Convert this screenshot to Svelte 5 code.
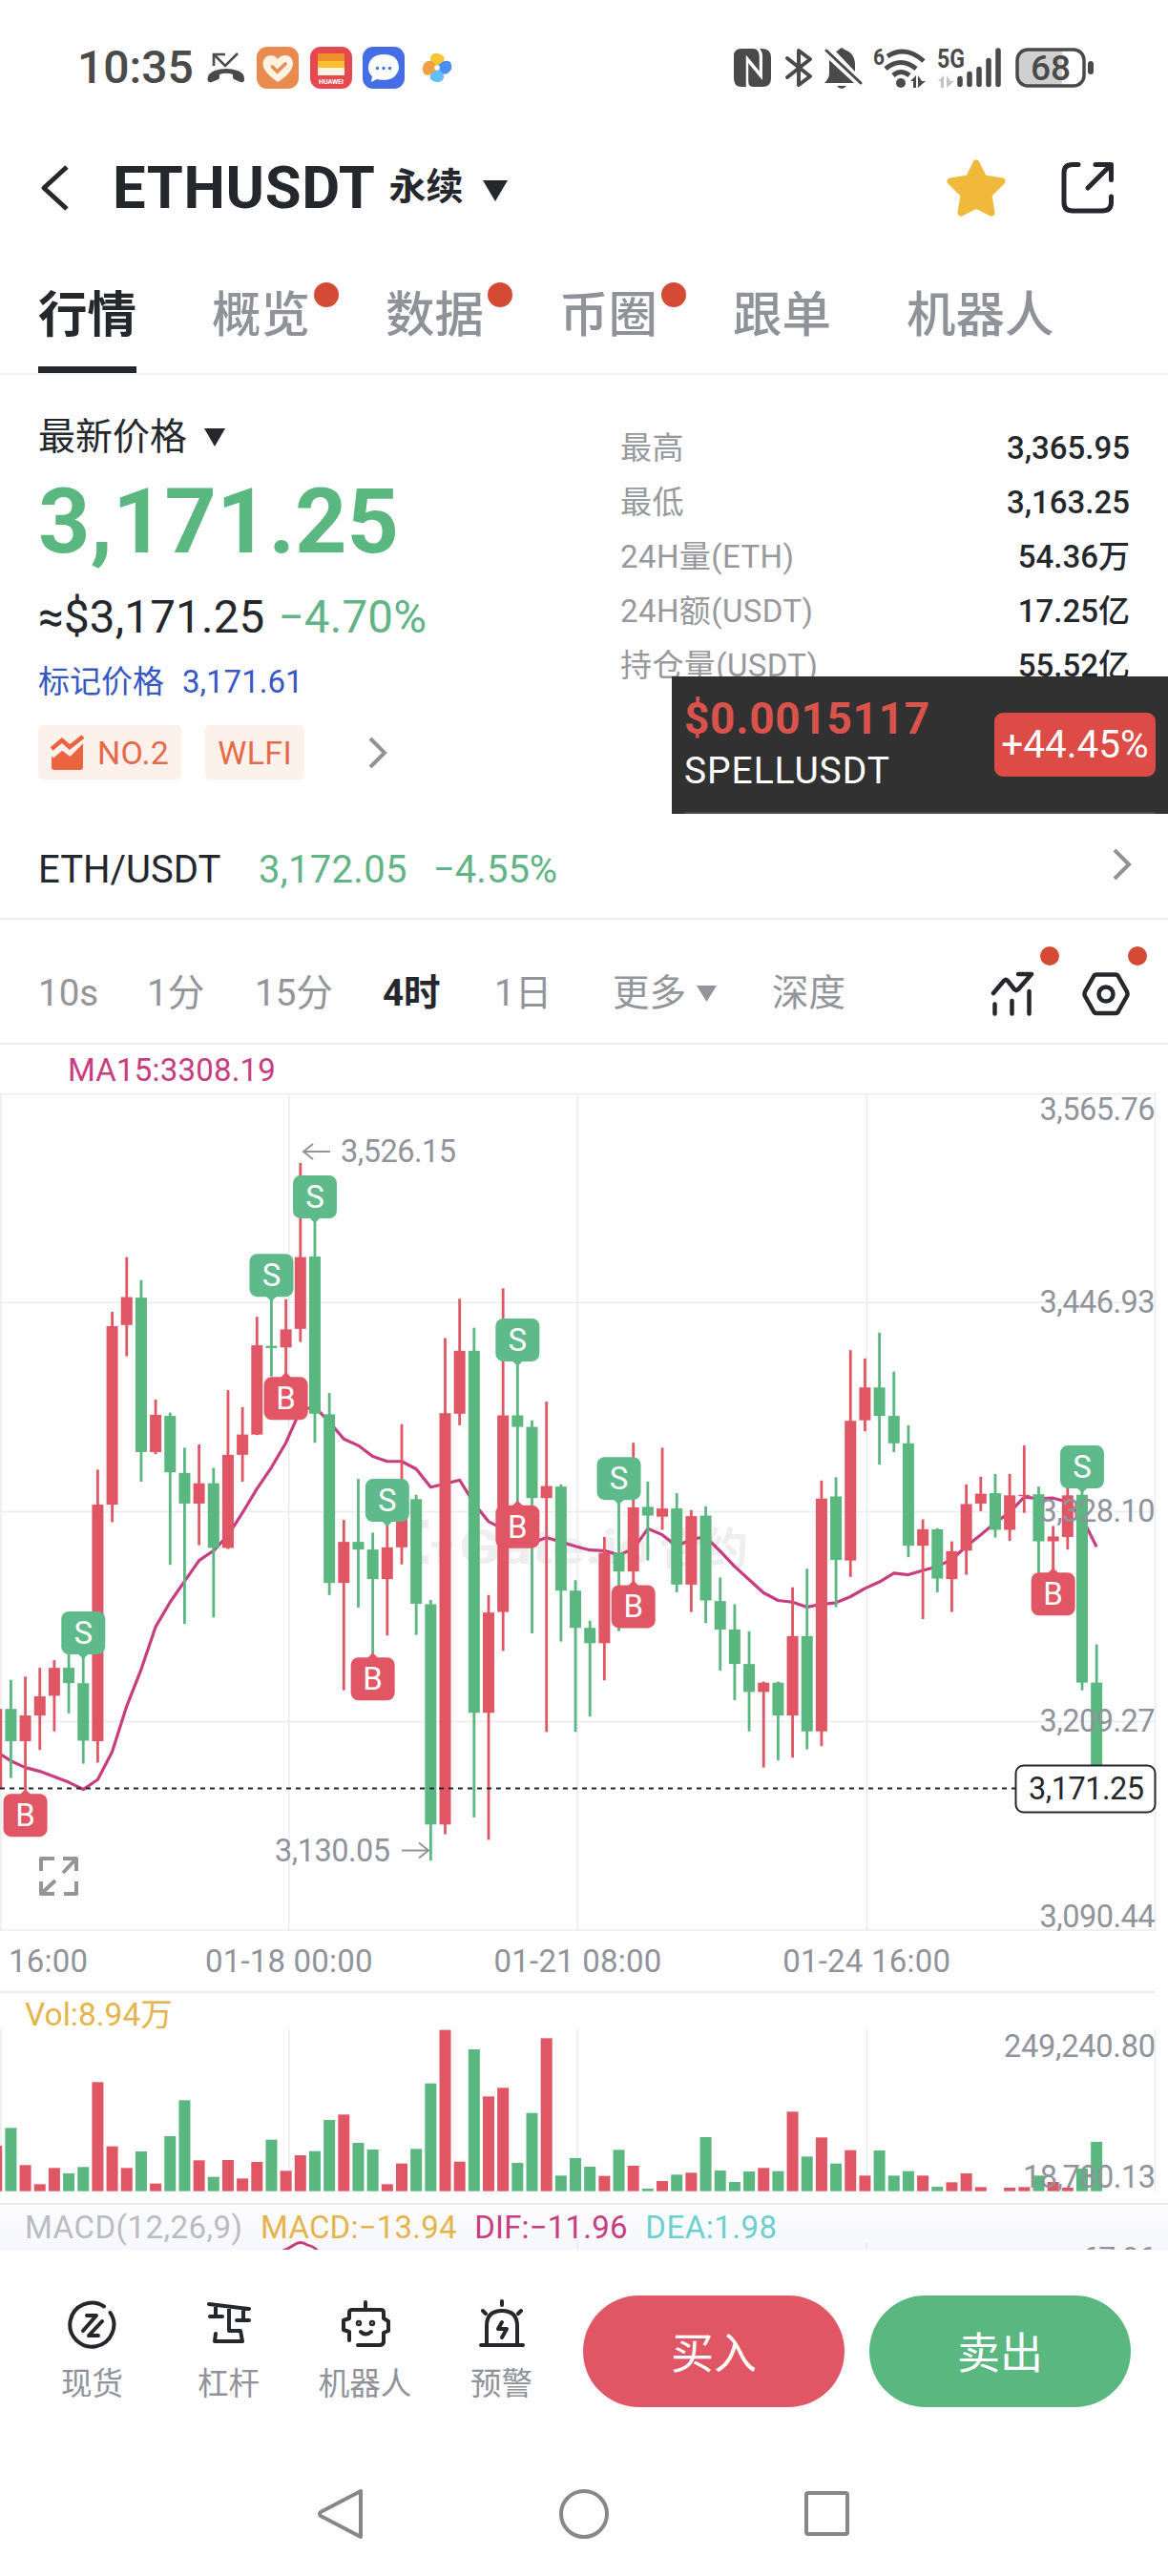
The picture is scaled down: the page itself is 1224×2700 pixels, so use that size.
<script lang="ts">
    type Candle = [dir: string, high: number, top: number, bottom: number, low: number, vol: number];

    const tabs = [
        { name: '行情', active: true, dot: false },
        { name: '概览', active: false, dot: true },
        { name: '数据', active: false, dot: true },
        { name: '币圈', active: false, dot: true },
        { name: '跟单', active: false, dot: false },
        { name: '机器人', active: false, dot: false }
    ];

    const stats = [
        ['最高', '3,365.95'],
        ['最低', '3,163.25'],
        ['24H量(ETH)', '54.36万'],
        ['24H额(USDT)', '17.25亿'],
        ['持仓量(USDT)', '55.52亿']
    ];

    // r = up, g = down; values are measured down from the top of the pane
    const candles: Candle[] = [
        ['r', 1152, 1152, 1297, 1297, 717],
        ['g', 1099, 1152, 1211, 1278, 661],
        ['r', 1093, 1164, 1211, 1300, 778],
        ['r', 1077, 1129, 1164, 1227, 838],
        ['r', 1063, 1077, 1128, 1193, 787],
        ['g', 1050, 1077, 1105, 1160, 804],
        ['g', 1050, 1105, 1210, 1252, 784],
        ['r', 715, 779, 1211, 1250, 517],
        ['r', 427, 453, 779, 811, 719],
        ['r', 327, 400, 451, 508, 787],
        ['g', 369, 401, 683, 737, 735],
        ['r', 587, 615, 683, 687, 836],
        ['g', 611, 617, 720, 889, 687],
        ['g', 675, 721, 777, 997, 574],
        ['r', 669, 740, 777, 853, 763],
        ['g', 712, 740, 858, 985, 815],
        ['r', 570, 688, 858, 860, 762],
        ['r', 601, 651, 688, 737, 820],
        ['r', 436, 488, 651, 652, 768],
        ['g', 400, 489, 493, 545, 698],
        ['r', 404, 459, 492, 545, 796],
        ['r', 155, 327, 458, 482, 747],
        ['g', 260, 326, 613, 666, 734],
        ['g', 575, 614, 922, 944, 636],
        ['r', 807, 847, 922, 1118, 619],
        ['g', 732, 847, 861, 967, 708],
        ['g', 830, 861, 915, 1052, 729],
        ['r', 815, 857, 915, 1018, 838],
        ['r', 632, 800, 857, 888, 773],
        ['g', 761, 769, 960, 1017, 727],
        ['g', 953, 961, 1363, 1429, 521],
        ['r', 475, 612, 1363, 1381, 353],
        ['r', 403, 498, 613, 634, 767],
        ['g', 456, 498, 1159, 1350, 414],
        ['r', 944, 976, 1159, 1391, 562],
        ['r', 384, 616, 975, 1046, 535],
        ['g', 520, 616, 637, 775, 771],
        ['g', 625, 637, 767, 1014, 614],
        ['r', 591, 745, 767, 1194, 379],
        ['g', 742, 746, 936, 1029, 811],
        ['g', 917, 936, 1004, 1194, 756],
        ['g', 991, 1004, 1032, 1166, 783],
        ['r', 838, 867, 1032, 1100, 812],
        ['g', 775, 867, 901, 1010, 730],
        ['r', 666, 784, 901, 925, 780],
        ['g', 737, 783, 799, 881, 852],
        ['r', 675, 786, 801, 825, 828],
        ['g', 758, 786, 925, 939, 808],
        ['r', 789, 800, 925, 975, 802],
        ['g', 782, 799, 954, 995, 690],
        ['g', 912, 955, 1007, 1082, 795],
        ['g', 961, 1007, 1070, 1136, 831],
        ['g', 1010, 1070, 1121, 1193, 798],
        ['r', 1102, 1104, 1121, 1259, 787],
        ['g', 1102, 1104, 1164, 1246, 797],
        ['r', 930, 1019, 1164, 1241, 610],
        ['g', 896, 1019, 1193, 1226, 751],
        ['r', 735, 768, 1193, 1220, 691],
        ['g', 729, 764, 880, 966, 773],
        ['r', 497, 626, 881, 911, 731],
        ['r', 512, 565, 625, 645, 811],
        ['g', 465, 565, 617, 706, 732],
        ['g', 536, 617, 667, 683, 811],
        ['g', 634, 667, 854, 875, 797],
        ['r', 806, 824, 854, 988, 811],
        ['g', 822, 824, 914, 939, 846],
        ['r', 846, 864, 915, 975, 832],
        ['r', 742, 778, 863, 907, 804],
        ['r', 728, 759, 777, 791, 847],
        ['g', 723, 758, 825, 839, 860],
        ['r', 723, 762, 825, 845, 849],
        ['r', 671, 761, 763, 794, 847],
        ['g', 746, 760, 846, 905, 811],
        ['r', 818, 837, 846, 903, 831],
        ['r', 745, 762, 838, 861, 849],
        ['g', 750, 761, 1104, 1118, 789],
        ['g', 1034, 1104, 1297, 1297, 705]
    ];

    const ma = [
        1230, 1247, 1259, 1266, 1276, 1286, 1299, 1281, 1230, 1147, 1080, 1002, 957, 919, 881, 863, 835, 794, 750, 711,
        666, 606, 601, 628, 659, 671, 691, 700, 700, 714, 747, 741, 734, 777, 810, 823, 850, 849, 839, 847, 855, 862,
        863, 871, 860, 823, 834, 855, 842, 838, 864, 892, 916, 940, 954, 957, 966, 961, 958, 947, 932, 920, 904, 907,
        899, 892, 879, 855, 834, 812, 793, 765, 768, 767, 774, 803, 856
    ];

    // [side, candle index, top edge]
    const marks: [string, number, number][] = [
        ['B', 2, 1307],
        ['S', 6, 974],
        ['S', 19, 321],
        ['B', 20, 546],
        ['S', 22, 178],
        ['B', 26, 1058],
        ['S', 27, 732],
        ['S', 36, 439],
        ['B', 36, 780],
        ['S', 43, 692],
        ['B', 44, 926],
        ['B', 73, 903],
        ['S', 75, 671]
    ];

    const gridX = [1, 302.7, 605.3, 908.3, 1210.5];
    const gridY = [0.6, 219.3, 438.6, 658.4, 877];
    const prices: [string, number][] = [
        ['3,565.76', 27.6],
        ['3,446.93', 229.7],
        ['3,328.10', 449],
        ['3,209.27', 668.8],
        ['3,090.44', 874.3]
    ];

    const x = (i: number) => 11.4 + (i - 1) * 15.17;
    const y = (v: number) => (v - 28) * 0.574;
    const color = (dir: string) => (dir === 'r' ? '#e15664' : '#5bb780');

    const maPoints = ma.map((v, i) => `${x(i)},${y(v)}`).join(' ');
</script>

<div class="screen">
    <div class="status">
        <span class="clock">10:35</span>
        <svg class="call" width="40" height="34" viewBox="0 0 40 34">
            <path d="M7 15V3h12M7 3l12 12L32 2" fill="none" stroke="#4a4a4a" stroke-width="2.6" />
            <path d="M0.500 30Q0 23 8 20Q20 16 32 20Q40 23 39 30Q38.500 33 35 32L28 29Q26.500 28 27 24Q20 21.500 13 24Q13.500 28 12 29L5 32Q1 33 .5 30Z" fill="#4a4a4a" />
        </svg>
        <svg class="app-icon" width="44" height="44" viewBox="0 0 44 44">
            <rect width="44" height="44" rx="11" fill="#e98a4e" />
            <path d="M22 37Q6 26 6.500 17Q8 9 15 9Q19.500 9 22 13Q24.500 9 30 9Q37 9 38 17Q38 27 22 37Z" fill="#fdf3e2" />
            <path d="M16.500 21l5 5 8.500-8" fill="none" stroke="#e98a4e" stroke-width="3.6" stroke-linecap="round" />
        </svg>
        <svg class="app-icon" width="44" height="44" viewBox="0 0 44 44">
            <rect width="44" height="44" rx="11" fill="#e6484f" />
            <path d="M8 7h28v8H8z" fill="#ef8f27" />
            <path d="M8 15h28v7H8z" fill="#f6c02e" />
            <path d="M8 22h28v8H8z" fill="#fff5e0" />
            <text x="22" y="39" text-anchor="middle" font-size="7" font-weight="700" fill="#fff" textLength="26">HUAWEI</text>
        </svg>
        <svg class="app-icon" width="44" height="44" viewBox="0 0 44 44">
            <rect width="44" height="44" rx="11" fill="#456ee6" />
            <path d="M22 8C12 8 6 14 6 22q0 6 4 9l-1 6 6-3q19 4 23-11Q38 8 22 8Z" fill="#fff" />
            <circle cx="15.500" cy="22.500" r="1.700" fill="#456ee6" />
            <circle cx="22" cy="22.500" r="1.700" fill="#456ee6" />
            <circle cx="28.500" cy="22.500" r="1.700" fill="#456ee6" />
        </svg>
        <svg class="pinwheel" width="32" height="32" viewBox="0 0 32 32">
            <path d="M16 16Q6 10 10 3Q15-2 23 4Q26 11 16 16Z" fill="#f7c534" />
            <path d="M16 16Q22 6 30 10Q34 17 27 22Q19 25 16 16Z" fill="#4a8ff0" />
            <path d="M16 16Q26 23 22 29Q16 34 9 28Q7 20 16 16Z" fill="#62bdf8" />
            <path d="M16 16Q10 26 3 23Q-2 16 4 10Q12 6 16 16Z" fill="#f0a043" />
            <circle cx="16" cy="16" r="2.800" fill="#fff" />
        </svg>

        <div class="signals">
            <svg width="41" height="42" viewBox="0 0 41 42">
                <path d="M9 1h12q7 0 7 8v18L14 11v30H9q-8 0-8-9V9q0-8 8-8Z" fill="#4a4a4a" />
                <path d="M30 1q10 0 10 9v22q0 9-9 9H22q-6 0-6-6V16l15 18V9q0-5-3-8Z" fill="#4a4a4a" />
                <path d="M15 40V11L29 28V10Q29 4 26 1" fill="none" stroke="#fefefe" stroke-width="2.500" />
            </svg>
            <svg class="bt" width="28" height="42" viewBox="0 0 28 42">
                <path d="M2 11l24 19-12 9V3l12 9L2 31" fill="none" stroke="#4a4a4a" stroke-width="4" stroke-linejoin="round" stroke-linecap="round" />
            </svg>
            <svg class="bell" width="40" height="43" viewBox="0 0 40 43">
                <path d="M12 4q3-1 4-3 3-2 5 1 10 3 11 14v9Z" fill="#4a4a4a" />
                <path d="M5 13L31 37H0q5-5 5-10Z" fill="#4a4a4a" />
                <path d="M2 3l36 34" stroke="#4a4a4a" stroke-width="3" stroke-linecap="round" />
                <path d="M13 40h10q-2 3-5 3t-5-3Z" fill="#4a4a4a" />
            </svg>
            <svg class="wifi" width="57" height="43" viewBox="0 0 57 43">
                <text x="0" y="18" font-size="24" font-weight="700" fill="#4a4a4a" textLength="12" lengthAdjust="spacingAndGlyphs">6</text>
                <g fill="none" stroke="#4a4a4a" stroke-width="5">
                    <path d="M15 9Q34-3 53 14" />
                    <path d="M13 22Q29 9 45 22" />
                    <path d="M21 29Q29 22 38 29" />
                </g>
                <circle cx="29" cy="37" r="5" fill="#4a4a4a" />
                <path d="M39 35l6-6v13h-3v-7ZM47 29v13l8-7h-4Z" fill="#4a4a4a" />
            </svg>
            <svg class="cell" width="66" height="42" viewBox="0 0 66 42">
                <text x="-1" y="21" font-size="27" font-weight="700" fill="#4a4a4a" textLength="29" lengthAdjust="spacingAndGlyphs">5G</text>
                <path d="M0 35l6-6v13H3v-7ZM9 29v13l8-7h-4Z" fill="#c4c4c4" />
                <g stroke="#4a4a4a" stroke-width="5.500" stroke-linecap="round">
                    <path d="M23 32.500v6M33 27.500v11M43 22.500v16M53 13.500v25M63 3v35.500" />
                </g>
            </svg>
            <svg class="battery" width="83" height="42" viewBox="0 0 83 42">
                <path d="M12 2h37v38H12Q2 40 2 29V12Q2 2 12 2Z" fill="#d0d0d0" />
                <rect x="2" y="2" width="70" height="38" rx="11" fill="none" stroke="#4a4a4a" stroke-width="3.500" />
                <rect x="76" y="14" width="6" height="14" rx="3" fill="#4a4a4a" />
                <text x="37" y="34" text-anchor="middle" font-size="37" font-weight="500" fill="#4a4a4a" textLength="42">68</text>
            </svg>
        </div>
    </div>

    <header class="header">
        <svg class="back" width="30" height="50" viewBox="0 0 30 50">
            <path d="M28 3L4 25l24 22" fill="none" stroke="#24272c" stroke-width="5" stroke-linejoin="round" />
        </svg>
        <h1>ETHUSDT</h1>
        <span class="kind">永续</span>
        <svg class="caret" width="28" height="23" viewBox="0 0 28 23"><path d="M1 1h26L14 23Z" fill="#24272c" /></svg>
        <div class="actions">
            <svg width="62" height="60" viewBox="0 0 62 60">
                <path d="M31 4l8 16 19 3-14 14 3 19L31 48 15 56 18 37 4 23l19-3Z" fill="#f0b93b" stroke="#f0b93b" stroke-width="7" stroke-linejoin="round" />
            </svg>
            <svg class="share" width="56" height="56" viewBox="0 0 56 56">
                <g fill="none" stroke="#24272c" stroke-width="5" stroke-linecap="round" stroke-linejoin="round">
                    <path d="M18 3.500H12Q3 3.500 3 12V43Q3 52 12 52H43Q52.500 52 52.500 43V37" />
                    <path d="M36 3.500H52.500V19.500M52 4L28 28" />
                </g>
            </svg>
        </div>
    </header>

    <nav class="tabs">
        {#each tabs as tab}
            <div class="tab" class:active={tab.active}>
                {tab.name}
                {#if tab.dot}<i class="tab-dot"></i>{/if}
            </div>
        {/each}
    </nav>

    <section class="summary">
        <div class="quote">
            <div class="latest">
                最新价格
                <svg width="24" height="20" viewBox="0 0 24 20"><path d="M1 1h22L12 20Z" fill="#24272c" /></svg>
            </div>
            <div class="price">3,171.25</div>
            <div class="fiat">≈$3,171.25 <span class="down">−4.70%</span></div>
            <div class="mark">标记价格 <span>3,171.61</span></div>
            <div class="chips">
                <span class="chip">
                    <svg width="36" height="38" viewBox="0 0 36 38">
                        <path d="M1 34V22L12 14l8 6L34 8v26q0 3-3 3H4q-3 0-3-3Z" fill="#ec6340" />
                        <path d="M0 21L12 11l8 6L35 2" fill="none" stroke="#fdf1ec" stroke-width="9" />
                        <path d="M1 15L12 6l8 7L34 2" fill="none" stroke="#ec6340" stroke-width="4.500" />
                    </svg>
                    NO.2
                </span>
                <span class="chip">WLFI</span>
                <svg class="more" width="20" height="34" viewBox="0 0 20 34">
                    <path d="M2 2l15 15L2 32" fill="none" stroke="#8f9297" stroke-width="4" />
                </svg>
            </div>
        </div>
        <dl class="stats">
            {#each stats as [label, value]}
                <div class="stat"><dt>{label}</dt><dd>{value}</dd></div>
            {/each}
        </dl>
        <div class="ticker">
            <div class="ticker-text">
                <b>$0.0015117</b>
                <span>SPELLUSDT</span>
            </div>
            <div class="ticker-change">+44.45%</div>
        </div>
    </section>

    <div class="pair">
        <span class="pair-name">ETH/USDT</span>
        <span class="pair-price">3,172.05</span>
        <span>−4.55%</span>
        <svg width="20" height="34" viewBox="0 0 20 34">
            <path d="M2 2l15 15L2 32" fill="none" stroke="#8f9297" stroke-width="4" />
        </svg>
    </div>

    <div class="periods">
        <span class="p1">10s</span>
        <span class="p2">1分</span>
        <span class="p3">15分</span>
        <span class="p4 on">4时</span>
        <span class="p5">1日</span>
        <span class="p6">更多<svg width="21" height="17" viewBox="0 0 21 17"><path d="M0 0h21L10.500 17Z" fill="#929599" /></svg></span>
        <span class="p7">深度</span>
        <div class="tools">
            <div class="tool">
                <svg width="46" height="48" viewBox="0 0 46 48">
                    <g fill="none" stroke="#24272c" stroke-width="4.500" stroke-linecap="round" stroke-linejoin="round">
                        <path d="M3 23L14 10q2-2 4 0l7 9q2 2 4 0L43 3H29" />
                        <path d="M4.500 34.500v10M22.500 31v13.500M40.500 21v23.500" />
                    </g>
                </svg>
                <i></i>
            </div>
            <div class="tool">
                <svg width="50" height="48" viewBox="0 0 50 48">
                    <path d="M15 3.500h20q2 0 3 2l9 16q1 2.500 0 4.500l-9 16q-1 2-3 2H15q-2 0-3-2L3 26q-1-2 0-4.500l9-16q1-2 3-2Z" fill="none" stroke="#24272c" stroke-width="4.500" />
                    <circle cx="25" cy="24" r="7.500" fill="none" stroke="#24272c" stroke-width="4.500" />
                </svg>
                <i></i>
            </div>
        </div>
    </div>

    <div class="ma-legend">MA15:3308.19</div>

    <svg class="chart" width="1224" height="878" viewBox="0 0 1224 878">
        {#each gridX as gx}
            <line x1={gx} x2={gx} y1="0" y2="878" stroke="#e9ebee" stroke-width="1.500" />
        {/each}
        {#each gridY as gy}
            <line x1="0" x2="1211" y1={gy} y2={gy} stroke="#e9ebee" stroke-width="1.500" />
        {/each}

        <g fill="#eeeeef">
            <path d="M449 447h-16v46h16v-9h-8v-28h8ZM452 470h22v6h-8v17h-7v-17h-7Z" />
            <text x="481" y="493" font-size="50" font-weight="700" textLength="202" lengthAdjust="spacingAndGlyphs">Gate.io</text>
            <text x="690" y="493" font-size="46" font-weight="700" textLength="94">合约</text>
        </g>

        <polyline points={maPoints} fill="none" stroke="#c83c80" stroke-width="3.200" stroke-linejoin="round" />

        {#each candles as [dir, high, top, bottom, low], i}
            <rect x={x(i) - 1.4} y={y(high)} width="2.800" height={y(low) - y(high)} fill={color(dir)} />
            <rect x={x(i) - 6} y={y(top)} width="12" height={Math.max(y(bottom) - y(top), 1.5)} fill={color(dir)} />
        {/each}

        <line x1="0" x2="1064" y1="728.500" y2="728.500" stroke="#24272c" stroke-width="1.900" stroke-dasharray="5 5" />

        {#each marks as [side, i, top]}
            {#if side === 'S'}
                <path d="M{x(i) - 6} {y(top) + 44}h12l-6 6Z" fill="#5fba8b" />
            {:else}
                <path d="M{x(i) - 6} {y(top) + 1}h12l-6 -6Z" fill="#e15664" />
            {/if}
            <rect x={x(i) - 23} y={y(top)} width="46" height="45" rx="8" fill={side === 'S' ? '#5fba8b' : '#e15664'} />
            <text x={x(i)} y={y(top) + 34} text-anchor="middle" font-size="33" fill="#fff">{side}</text>
        {/each}

        <g class="axis">
            {#each prices as [label, py]}
                <text x="1089.500" y={py} textLength="121">{label}</text>
            {/each}
            <text x="357" y="72.400" textLength="121">3,526.15</text>
            <text x="288" y="805" textLength="121">3,130.05</text>
        </g>
        <path d="M346 61H319M328 53l-10 8 10 8M421 793.500h27M439 785.500l10 8-10 8" fill="none" stroke="#929599" stroke-width="2" />

        <rect x="1064.500" y="704.500" width="146" height="49" rx="8" fill="#fefefe" stroke="#24272c" stroke-width="2" />
        <text x="1078" y="739.500" font-size="32.500" fill="#24272c" textLength="121">3,171.25</text>

        <g fill="none" stroke="#929599" stroke-width="4" stroke-linejoin="round">
            <path d="M43 815V802H57M66 802H80V815M80 802L66 817M43 826V839H57M43 839L58 825M80 826V839H67" />
        </g>
    </svg>

    <div class="dates">
        <span class="first">16:00</span>
        <span>01-18 00:00</span>
        <span>01-21 08:00</span>
        <span>01-24 16:00</span>
    </div>

    <div class="vol-legend">Vol:8.94万</div>
    <svg class="volume" width="1224" height="170" viewBox="0 0 1224 170">
        {#each gridX as gx}
            <line x1={gx} x2={gx} y1="0" y2="170" stroke="#e9ebee" stroke-width="1.500" />
        {/each}
        {#each candles as [dir, , , , , vol], i}
            <rect x={x(i) - 6} y={vol / 3 - 117} width="12" height={(860 - vol) / 3} fill={color(dir)} />
        {/each}
        <g class="axis">
            <text x="1052" y="29" textLength="159">249,240.80</text>
            <text x="1072" y="165.700" textLength="139">18,780.13</text>
        </g>
    </svg>

    <div class="macd">
        <span class="macd-name">MACD(12,26,9)</span>
        <span class="macd-value">MACD:−13.94</span>
        <span class="dif">DIF:−11.96</span>
        <span class="dea">DEA:1.98</span>
        <svg width="1224" height="49" viewBox="0 0 1224 49">
            <line x1="605.300" x2="605.300" y1="40" y2="49" stroke="#e5e7ec" stroke-width="1.500" />
            <line x1="908.300" x2="908.300" y1="40" y2="49" stroke="#e5e7ec" stroke-width="1.500" />
            <path d="M291 50Q301 47 308 42Q315 37 322 42Q331 44 334 50" fill="none" stroke="#c83c80" stroke-width="2.800" />
            <text class="macd-axis" x="1134" y="66" textLength="77">67.96</text>
        </svg>
    </div>

    <footer class="trade">
        <div class="shortcuts">
            <div class="shortcut">
                <svg width="52" height="52" viewBox="0 0 52 52">
                    <path d="M38 7.500A23 23 0 1 0 44.500 14" />
                    <path d="M20 17h10L16 33M36 23L22 38h10" />
                </svg>
                现货
            </div>
            <div class="shortcut">
                <svg width="52" height="52" viewBox="0 0 52 52">
                    <path d="M5 5l42 5M12 6v12M6 18h13M41 10v12M34 22h13M26 8v25h12l2 11h-29l1-8" />
                </svg>
                杠杆
            </div>
            <div class="shortcut">
                <svg width="52" height="52" viewBox="0 0 52 52">
                    <path d="M26 3v8M9 43V34L3 32V22l6-2V14q0-3 3-3h30q3 0 3 3v6l5 3V33l-5 2V45q-1 3-4 3H18M21 34q5 5 11 0" />
                    <circle cx="19" cy="25" r="1.200" /><circle cx="33" cy="25" r="1.200" />
                </svg>
                机器人
            </div>
            <div class="shortcut">
                <svg width="52" height="52" viewBox="0 0 52 52">
                    <path d="M4 48h44M10 47V28Q10 12 26 12T42 28V47M26 2v4M6 12l3 3M46 12l-3 3" />
                    <path d="M26 24l-4 7h9l-5 9" />
                </svg>
                预警
            </div>
        </div>
        <button class="buy">买入</button>
        <button class="sell">卖出</button>
    </footer>

    <div class="sysnav">
        <svg width="50" height="56" viewBox="0 0 50 56">
            <path d="M46 4V52L4 30q-2-2 0-4Z" />
        </svg>
        <svg width="56" height="56" viewBox="0 0 56 56"><circle cx="28" cy="28" r="24" /></svg>
        <svg width="50" height="50" viewBox="0 0 50 50"><rect x="3" y="3" width="43" height="43" rx="2" /></svg>
    </div>
</div>

<style>
    :global(body) {
        background: #fefefe;
    }

    .screen {
        width: 1224px;
        height: 2700px;
        overflow: hidden;
        background: #fefefe;
        color: #24272c;
        font-family: Roboto, 'Noto Sans CJK SC', sans-serif;
        line-height: 1;
    }

    svg {
        display: block;
        flex: none;
    }

    svg text {
        font-family: Roboto, 'Noto Sans CJK SC', sans-serif;
    }

    .status {
        display: flex;
        align-items: center;
        height: 142px;
        padding: 0 77px 0 81px;
        box-sizing: border-box;
    }

    .status svg {
        overflow: visible;
    }

    .clock {
        width: 136px;
        font-size: 48px;
        font-weight: 500;
        color: #4a4a4a;
    }

    .call {
        margin-right: 12px;
    }

    .app-icon {
        margin-right: 11.500px;
    }

    .pinwheel {
        margin-left: 6px;
    }

    .signals {
        display: flex;
        align-items: center;
        margin-left: auto;
    }

    .bt {
        margin-left: 14px;
    }

    .bell {
        margin-left: 13px;
    }

    .wifi {
        margin-left: 11px;
    }

    .cell {
        margin-left: 11px;
    }

    .battery {
        margin-left: 15px;
    }

    .header {
        display: flex;
        align-items: center;
        height: 109px;
        padding: 0 56px 0 42px;
    }

    h1 {
        margin: 2px 0 0 46px;
        font-size: 61.500px;
        font-weight: 700;
        letter-spacing: 0.600px;
    }

    .kind {
        margin-left: 14px;
        font-size: 39px;
        font-weight: 700;
    }

    .caret {
        margin: 6px 0 0 20px;
    }

    .actions {
        display: flex;
        align-items: center;
        margin-left: auto;
        gap: 58px;
    }

    .tabs {
        display: flex;
        gap: 79px;
        height: 140px;
        padding: 0 40px;
        border-bottom: 2px solid #f1f2f4;
    }

    .tab {
        position: relative;
        padding-top: 54px;
        font-size: 51.500px;
        font-weight: 500;
        color: #8f9399;
    }

    .tab.active {
        color: #24272c;
        font-weight: 700;
    }

    .tab.active::after {
        content: '';
        position: absolute;
        left: 0;
        right: 0;
        bottom: 0;
        height: 7px;
        background: #24272c;
    }

    .tab-dot {
        position: absolute;
        top: 45px;
        right: -30px;
        width: 26px;
        height: 26px;
        border-radius: 50%;
        background: #d44a35;
    }

    .summary {
        position: relative;
        display: flex;
        height: 468px;
        padding: 0 40px;
    }

    .quote {
        width: 610px;
        padding-top: 45px;
    }

    .latest {
        display: flex;
        align-items: center;
        gap: 17px;
        height: 40px;
        font-size: 39px;
    }

    .price {
        height: 90px;
        margin-top: 24px;
        font-size: 95px;
        line-height: 90px;
        font-weight: 700;
        color: #5bb780;
    }

    .fiat {
        height: 50px;
        margin-top: 30px;
        font-size: 47.500px;
        line-height: 50px;
        letter-spacing: 0.200px;
        white-space: nowrap;
    }

    .fiat .down {
        margin-left: 2px;
        color: #62b486;
    }

    .mark {
        display: flex;
        align-items: center;
        gap: 19px;
        height: 40px;
        margin-top: 22px;
        font-size: 33px;
        color: #3757c2;
    }

    .chips {
        display: flex;
        align-items: center;
        margin-top: 26px;
    }

    .chip {
        display: flex;
        align-items: center;
        gap: 13px;
        height: 57px;
        margin-right: 25px;
        padding: 0 13px;
        border-radius: 5px;
        background: #fdf1ec;
        color: #e66a48;
        font-size: 34px;
        letter-spacing: 0.300px;
    }

    .more {
        margin-left: 42px;
    }

    .stats {
        flex: 1;
        margin: 0;
        padding-top: 47.500px;
    }

    .stat {
        display: flex;
        align-items: center;
        justify-content: space-between;
        height: 57px;
        font-size: 33px;
    }

    dt {
        color: #97999d;
        letter-spacing: 0.400px;
    }

    dd {
        margin: 0;
        font-size: 33px;
        font-weight: 500;
    }

    .ticker {
        position: absolute;
        left: 704px;
        top: 315.500px;
        display: flex;
        align-items: center;
        justify-content: space-between;
        width: 520px;
        height: 144px;
        padding: 0 13px;
        box-sizing: border-box;
        background: #313131;
    }

    .ticker::after {
        content: '';
        position: absolute;
        left: 13px;
        right: 13px;
        bottom: 0;
        height: 2px;
        background: #4c4847;
    }

    .ticker-text {
        display: flex;
        flex-direction: column;
        gap: 13px;
        margin-top: -3px;
        color: #fff;
        font-size: 39px;
        letter-spacing: 0.900px;
    }

    .ticker-text b {
        font-size: 46px;
        font-weight: 700;
        letter-spacing: 0.700px;
        color: #d9534c;
    }

    .ticker-change {
        width: 169px;
        height: 67px;
        border-radius: 9px;
        background: #dc4b46;
        color: #fff;
        font-size: 40.500px;
        line-height: 67px;
        text-align: center;
    }

    .pair {
        display: flex;
        align-items: center;
        height: 101px;
        padding: 0 38px 0 40px;
        border-bottom: 2px solid #eeeff1;
        color: #62b486;
        font-size: 40px;
    }

    .pair-name {
        width: 231px;
        color: #24272c;
    }

    .pair-price {
        width: 183px;
        letter-spacing: 0.300px;
    }

    .pair svg {
        margin: -12px 0 0 auto;
    }

    .periods {
        display: flex;
        align-items: center;
        height: 131px;
        padding: 26px 40px 0 40px;
        box-sizing: border-box;
        border-bottom: 2px solid #eeeff1;
        color: #929599;
        font-size: 38.500px;
    }

    .p1 {
        width: 114px;
    }

    .p2 {
        width: 113px;
    }

    .p3 {
        width: 134px;
    }

    .p4 {
        width: 117px;
    }

    .p5 {
        width: 124px;
    }

    .p6 {
        display: flex;
        align-items: center;
        gap: 11px;
        width: 167px;
    }

    .on {
        color: #24272c;
        font-weight: 700;
    }

    .tools {
        display: flex;
        gap: 50px;
        margin-left: auto;
    }

    .tool {
        position: relative;
    }

    .tool i {
        position: absolute;
        top: -26px;
        right: -26px;
        width: 20px;
        height: 20px;
        border-radius: 50%;
        background: #d44a35;
    }

    .tool:last-child i {
        right: -18px;
    }

    .ma-legend {
        height: 51px;
        padding-left: 71px;
        color: #c83c80;
        font-size: 33px;
        line-height: 54px;
        letter-spacing: 0.200px;
    }

    .axis text {
        font-size: 32.500px;
        fill: #8f939b;
    }

    .dates {
        display: grid;
        grid-template-columns: 151.500px 302.700px 302.700px 302.700px;
        width: 1211px;
        height: 65px;
        box-sizing: border-box;
        border-bottom: 2px solid #e9ebee;
        color: #8f939b;
        font-size: 33px;
        line-height: 63px;
        text-align: center;
        letter-spacing: 0.200px;
    }

    .dates .first {
        padding-left: 9px;
        text-align: left;
    }

    .vol-legend {
        height: 38px;
        padding-left: 26px;
        color: #e5b44c;
        font-size: 33.500px;
        line-height: 46px;
    }

    .macd {
        position: relative;
        display: flex;
        gap: 18.500px;
        height: 49px;
        margin-top: 12px;
        padding-left: 26px;
        border-top: 2px solid #e9ebee;
        box-sizing: border-box;
        background: linear-gradient(#fdfdfe, #f6f7fb);
        overflow: hidden;
        font-size: 33px;
        line-height: 47px;
        letter-spacing: 0.200px;
        margin-bottom: 1px;
    }

    .macd svg {
        position: absolute;
        left: 0;
        top: 0;
        letter-spacing: 0;
    }

    .macd-name {
        color: #b9bcc2;
        letter-spacing: 0.500px;
    }

    .macd-value {
        color: #e5b44c;
    }

    .dif {
        color: #c83c80;
    }

    .dea {
        color: #6dcfcf;
        letter-spacing: 0.500px;
    }

    .macd-axis {
        font-size: 32px;
        fill: #8f939b;
    }

    .trade {
        display: flex;
        align-items: flex-start;
        height: 164px;
        padding: 47px 39px 0 25px;
    }

    .shortcuts {
        display: flex;
        width: 586px;
    }

    .shortcut {
        display: flex;
        flex-direction: column;
        align-items: center;
        width: 143px;
        padding-top: 4px;
        gap: 20.500px;
        color: #8f9399;
        font-size: 32.500px;
    }

    .shortcut svg {
        fill: none;
        stroke: #24272c;
        stroke-width: 4;
        stroke-linecap: round;
        stroke-linejoin: round;
    }

    button {
        width: 274px;
        height: 117px;
        padding: 0 0 3px;
        border: 0;
        border-radius: 59px;
        color: #fff;
        font-family: inherit;
        font-size: 45px;
        font-weight: 400;
    }

    .buy {
        background: #e15664;
    }

    .sell {
        margin-left: 26px;
        background: #5bb780;
    }

    .sysnav {
        display: flex;
        align-items: center;
        justify-content: center;
        gap: 202px;
        height: 130px;
    }

    .sysnav svg {
        fill: none;
        stroke: #878787;
        stroke-width: 4;
        stroke-linejoin: round;
    }
</style>
